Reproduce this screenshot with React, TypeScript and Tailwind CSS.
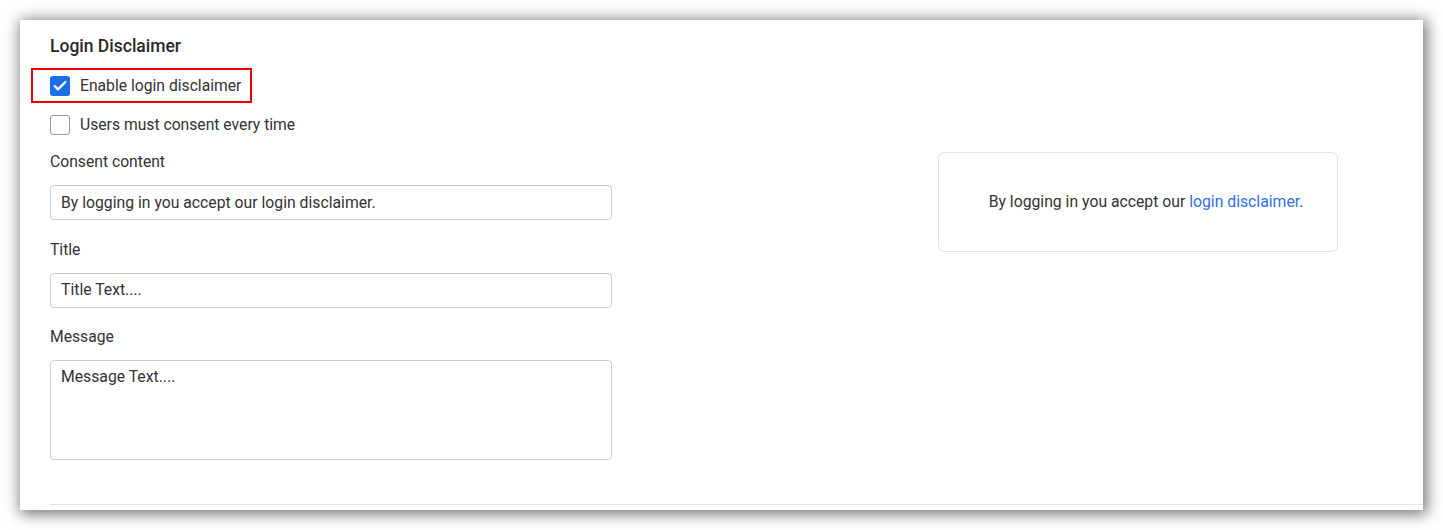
import { Check } from "lucide-react";

const font = { fontFamily: "Roboto, 'Noto Sans', sans-serif" };

function CheckRow({ checked, label }: { checked?: boolean; label: string }) {
  return (
    <label className="flex h-5 items-center gap-[10px] text-[15.7px] leading-5 text-[#333]">
      <span
        className={
          checked
            ? "flex h-5 w-5 items-center justify-center rounded-[3px] bg-[#1a6fe8]"
            : "h-5 w-5 rounded-[3px] border border-[#999] bg-white"
        }
      >
        {checked && <Check size={16} strokeWidth={3.5} className="text-white" />}
      </span>
      {label}
    </label>
  );
}

function Field({ label, value, area }: { label: string; value: string; area?: boolean }) {
  return (
    <div className="flex flex-col">
      <div className="h-5 text-[15.7px] leading-5 text-[#333]">{label}</div>
      {area ? (
        <div className="mt-[13px] h-[100px] rounded-[4px] border border-[#ccc] px-[10px] pt-[6px] text-[15.75px] leading-5 text-[#333]">
          {value}
        </div>
      ) : (
        <div className="mt-[13px] flex h-[35px] items-center rounded-[4px] border border-[#ccc] px-[10px] text-[15.75px] leading-5 text-[#333]">
          {value}
        </div>
      )}
    </div>
  );
}

export default function App() {
  return (
    <div className="min-h-screen bg-white p-5" style={font}>
      <div className="h-[490px] bg-white pb-[5px] shadow-[2px_2px_14px_2px_rgba(0,0,0,0.55)]">
        <div className="ml-[30px] flex h-[485px] flex-col border-b border-[#e3e3e3]">
          <h2 className="mt-[14px] h-6 text-[17.5px] font-medium leading-6 text-[#2a2a2a]">Login Disclaimer</h2>
          <div className="mt-[10px] -ml-[19px] flex h-[35px] w-[221px] items-center border-2 border-[#e00] pl-[17px]">
            <CheckRow checked label="Enable login disclaimer" />
          </div>
          <div className="mt-[12px]">
            <CheckRow label="Users must consent every time" />
          </div>
          <div className="mt-[17px] flex">
            <div className="flex w-[562px] flex-col gap-[19.5px]">
              <Field label="Consent content" value="By logging in you accept our login disclaimer." />
              <Field label="Title" value="Title Text...." />
              <Field label="Message" value="Message Text...." area />
            </div>
            <div className="ml-[326px] flex h-[100px] w-[400px] items-center justify-center rounded-[6px] border border-[#e3e3e3] pl-4 text-[15.75px] text-[#333]">
              <span>
                By logging in you accept our <span className="text-[#2f6ff0]">login disclaimer</span>.
              </span>
            </div>
          </div>
        </div>
      </div>
    </div>
  );
}
